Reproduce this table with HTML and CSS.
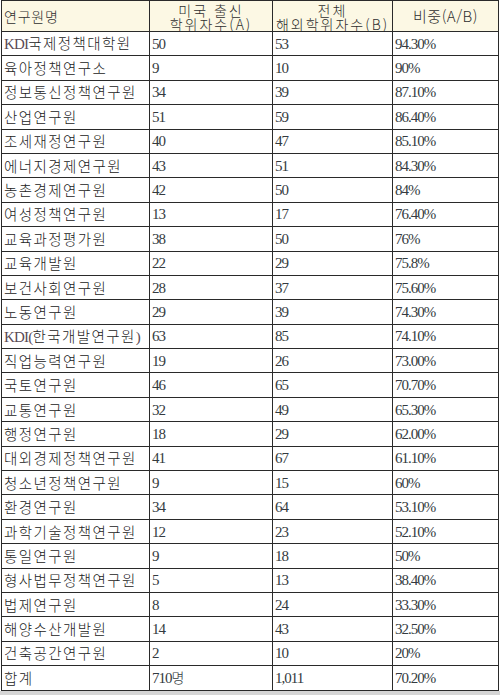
FILE: index.html
```html
<!DOCTYPE html>
<html lang="ko">
<head>
<meta charset="utf-8">
<link rel="stylesheet" href="styles.css">
</head>
<body>
<div class="page">
<table class="stats">
<colgroup><col class="c1"><col class="c2"><col class="c3"><col class="c4"></colgroup>
<thead>
<tr>
<th class="left">연구원명</th>
<th><span class="l1">미국 출신</span><br><span class="l2">학위자수(A)</span></th>
<th><span class="l1">전체</span><br><span class="l2">해외학위자수(B)</span></th>
<th class="one">비중(A/B)</th>
</tr>
</thead>
<tbody>
<tr><td><span class="lat">KDI</span>국제정책대학원</td><td>50</td><td>53</td><td>94.30%</td></tr>
<tr><td>육아정책연구소</td><td>9</td><td>10</td><td>90%</td></tr>
<tr><td>정보통신정책연구원</td><td>34</td><td>39</td><td>87.10%</td></tr>
<tr><td>산업연구원</td><td>51</td><td>59</td><td>86.40%</td></tr>
<tr><td>조세재정연구원</td><td>40</td><td>47</td><td>85.10%</td></tr>
<tr><td>에너지경제연구원</td><td>43</td><td>51</td><td>84.30%</td></tr>
<tr><td>농촌경제연구원</td><td>42</td><td>50</td><td>84%</td></tr>
<tr><td>여성정책연구원</td><td>13</td><td>17</td><td>76.40%</td></tr>
<tr><td>교육과정평가원</td><td>38</td><td>50</td><td>76%</td></tr>
<tr><td>교육개발원</td><td>22</td><td>29</td><td>75.8%</td></tr>
<tr><td>보건사회연구원</td><td>28</td><td>37</td><td>75.60%</td></tr>
<tr><td>노동연구원</td><td>29</td><td>39</td><td>74.30%</td></tr>
<tr><td><span class="lat">KDI(</span>한국개발연구원<span class="lat">)</span></td><td>63</td><td>85</td><td>74.10%</td></tr>
<tr><td>직업능력연구원</td><td>19</td><td>26</td><td>73.00%</td></tr>
<tr><td>국토연구원</td><td>46</td><td>65</td><td>70.70%</td></tr>
<tr><td>교통연구원</td><td>32</td><td>49</td><td>65.30%</td></tr>
<tr><td>행정연구원</td><td>18</td><td>29</td><td>62.00%</td></tr>
<tr><td>대외경제정책연구원</td><td>41</td><td>67</td><td>61.10%</td></tr>
<tr><td>청소년정책연구원</td><td>9</td><td>15</td><td>60%</td></tr>
<tr><td>환경연구원</td><td>34</td><td>64</td><td>53.10%</td></tr>
<tr><td>과학기술정책연구원</td><td>12</td><td>23</td><td>52.10%</td></tr>
<tr><td>통일연구원</td><td>9</td><td>18</td><td>50%</td></tr>
<tr><td>형사법무정책연구원</td><td>5</td><td>13</td><td>38.40%</td></tr>
<tr><td>법제연구원</td><td>8</td><td>24</td><td>33.30%</td></tr>
<tr><td>해양수산개발원</td><td>14</td><td>43</td><td>32.50%</td></tr>
<tr><td>건축공간연구원</td><td>2</td><td>10</td><td>20%</td></tr>
<tr><td>합계</td><td>710<span class="ko">명</span></td><td>1,011</td><td>70.20%</td></tr>
</tbody>
</table>
</div>
</body>
</html>
```

FILE: styles.css
```css
html, body {
  margin: 0;
  padding: 0;
}
body {
  background: #d6d6d6;
  width: 500px;
  height: 695px;
  overflow: hidden;
}
.page {
  background: #ffffff;
  height: 691px;
  padding-left: 1px;
  box-sizing: border-box;
}
.stats {
  border-collapse: collapse;
  table-layout: fixed;
  width: 497px;
  font-family: "Liberation Serif", "Noto Sans CJK KR", serif;
  color: #2b2b2b;
}
.c1 { width: 148px; }
.c2 { width: 123px; }
.c3 { width: 120px; }
.c4 { width: 106px; }
.stats th, .stats td {
  border: 1px solid #2a2a2a;
  padding: 0 2px;
  overflow: hidden;
  white-space: nowrap;
}
.stats thead tr {
  height: 31px;
}
.stats th {
  background: #fcf8e4;
  font-family: "Noto Sans CJK KR", sans-serif;
  font-weight: 300;
  font-size: 14px;
  line-height: 14px;
  text-align: center;
  vertical-align: bottom;
  padding-bottom: 0;
  color: #2e2e2e;
}
.stats th .l1 {
  letter-spacing: 2px;
}
.stats th .l2 {
  letter-spacing: 2px;
}
.stats th.left {
  text-align: left;
  vertical-align: middle;
  letter-spacing: 0.8px;
  padding-left: 2px;
}
.stats th.one {
  vertical-align: middle;
  letter-spacing: 0.5px;
  font-size: 15px;
}
.stats tbody tr {
  height: 24.4px;
}
.stats td {
  font-size: 15px;
  letter-spacing: -1px;
  vertical-align: middle;
  line-height: 18px;
  color: #333a40;
}
.stats td:first-child {
  font-family: "Noto Sans CJK KR", sans-serif;
  font-weight: 300;
  font-size: 14.5px;
  letter-spacing: 1.4px;
  padding-left: 2px;
  color: #222222;
}
.stats .lat {
  font-family: "Liberation Serif", serif;
  font-weight: 400;
  letter-spacing: -0.8px;
  font-size: 15px;
  color: #5a4a55;
}
.stats .ko {
  font-family: "Noto Sans CJK KR", sans-serif;
  font-weight: 300;
  letter-spacing: 0;
  font-size: 14px;
}
```
